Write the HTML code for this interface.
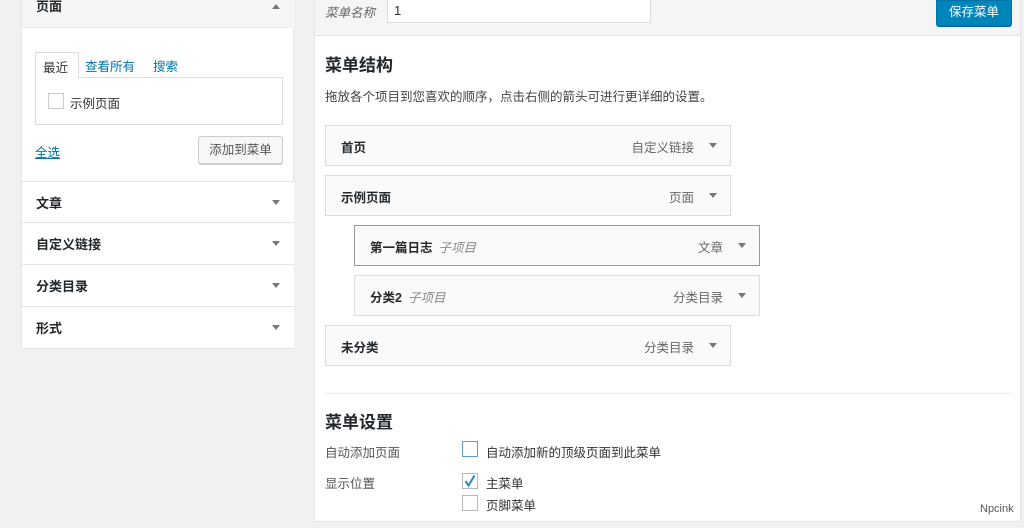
<!DOCTYPE html>
<html><head><meta charset="utf-8"><style>
*{box-sizing:border-box;margin:0;padding:0}
body{width:1024px;height:528px;background:#f1f1f1;position:relative;overflow:hidden;font-family:"Liberation Sans","Noto Sans CJK SC",sans-serif;font-size:12.5px;color:#444}
.a{position:absolute}
.lp{left:21px;top:0;width:273px;height:349px;background:#fff;border:1px solid #e5e5e5;border-top:none}
.sec{left:0;width:272px;height:42px;border-top:1px solid #e5e5e5;background:#fff;font-weight:bold;font-size:13px;color:#23282d;padding:11px 0 0 14px}
.arr{position:absolute;right:14px;top:18px;width:0;height:0;border-left:4px solid transparent;border-right:4px solid transparent;border-top:5px solid #777}
.item{background:#fafafa;border:1px solid #dcdcdc;height:41px;font-weight:bold;font-size:12.5px;color:#23282d;padding:11px 0 0 15px}
.item .t{position:absolute;right:36px;top:11px;font-weight:normal;color:#666}
.item .arr{right:13px;top:17px}
.item i{font-weight:normal;color:#888;margin-left:6px}
.cb{width:16px;height:16px;border:1px solid #b4b9be;background:#fff}
</style></head><body>
<div class="a lp">
 <div class="a" style="left:0;top:0;width:272px;height:28px;background:#f6f6f6;border-bottom:1px solid #eee;font-weight:bold;font-size:13px;color:#23282d;padding:0 0 0 14px;line-height:14px">页面<div class="a" style="right:14px;top:4px;border-left:4px solid transparent;border-right:4px solid transparent;border-bottom:5px solid #777;width:0;height:0"></div></div>
 <div class="a" style="left:13px;top:52px;width:44px;height:26px;border:1px solid #ddd;border-bottom:none;background:#fff;padding:4px 0 0 7px;color:#333;z-index:2">最近</div>
 <div class="a" style="left:63px;top:56px;color:#0073aa">查看所有</div>
 <div class="a" style="left:131px;top:56px;color:#0073aa">搜索</div>
 <div class="a" style="left:13px;top:77px;width:248px;height:48px;border:1px solid #ddd;background:#fff"></div>
 <div class="a cb" style="left:26px;top:93px;border-color:#ccc"></div>
 <div class="a" style="left:48px;top:93px;color:#333">示例页面</div>
 <div class="a" style="left:13px;top:142px;color:#0073aa;text-decoration:underline">全选</div>
 <div class="a" style="left:176px;top:136px;width:85px;height:28px;border:1px solid #ccc;background:#f7f7f7;border-radius:3px;box-shadow:0 1px 0 #ccc;color:#555;text-align:center;line-height:26px">添加到菜单</div>
 <div class="a sec" style="top:181px">文章<div class="arr"></div></div>
 <div class="a sec" style="top:222px">自定义链接<div class="arr"></div></div>
 <div class="a sec" style="top:264px">分类目录<div class="arr"></div></div>
 <div class="a sec" style="top:306px">形式<div class="arr"></div></div>
</div>
<div class="a" style="left:314px;top:0;width:707px;height:522px;background:#fff;border:1px solid #e5e5e5;border-top:none"></div>
<div class="a" style="left:315px;top:0;width:705px;height:36px;background:#f5f5f5;border-bottom:1px solid #e5e5e5"></div>
<div class="a" style="left:325px;top:2px;font-style:italic;color:#666">菜单名称</div>
<div class="a" style="left:387px;top:0;width:264px;height:23px;background:#fff;border:1px solid #ddd;border-top:none;padding:3px 0 0 6px;color:#333;font-size:13px">1</div>
<div class="a" style="left:936px;top:0;width:76px;height:26px;background:#0085ba;border:1px solid #0073aa;border-radius:0 0 3px 3px;box-shadow:0 1px 0 #006799;color:#fff;text-align:center;line-height:22px;font-size:12.5px">保存菜单</div>
<div class="a" style="left:325px;top:51px;font-size:17px;font-weight:bold;color:#23282d">菜单结构</div>
<div class="a" style="left:325px;top:86px;color:#444">拖放各个项目到您喜欢的顺序，点击右侧的箭头可进行更详细的设置。</div>
<div class="a item" style="left:325px;top:125px;width:406px">首页<span class="t">自定义链接</span><div class="arr"></div></div>
<div class="a item" style="left:325px;top:175px;width:406px">示例页面<span class="t">页面</span><div class="arr"></div></div>
<div class="a item" style="left:354px;top:225px;width:406px;border-color:#999">第一篇日志<i>子项目</i><span class="t">文章</span><div class="arr"></div></div>
<div class="a item" style="left:354px;top:275px;width:406px">分类2<i>子项目</i><span class="t">分类目录</span><div class="arr"></div></div>
<div class="a item" style="left:325px;top:325px;width:406px">未分类<span class="t">分类目录</span><div class="arr"></div></div>
<div class="a" style="left:325px;top:393px;width:688px;border-top:1px solid #eee"></div>
<div class="a" style="left:325px;top:408px;font-size:17px;font-weight:bold;color:#23282d">菜单设置</div>
<div class="a" style="left:325px;top:442px;color:#555">自动添加页面</div>
<div class="a cb" style="left:462px;top:441px;border-color:#5b9dd9"></div>
<div class="a" style="left:486px;top:442px;color:#333">自动添加新的顶级页面到此菜单</div>
<div class="a" style="left:325px;top:473px;color:#555">显示位置</div>
<div class="a cb" style="left:462px;top:473px"></div>
<svg class="a" style="left:462px;top:473px" width="16" height="16"><path d="M3.5 8 L6.5 12.5 L12.5 2.5" fill="none" stroke="#1e8cbe" stroke-width="2"/></svg>
<div class="a" style="left:486px;top:473px;color:#333">主菜单</div>
<div class="a cb" style="left:462px;top:495px"></div>
<div class="a" style="left:486px;top:495px;color:#333">页脚菜单</div>
<div class="a" style="left:980px;top:503px;color:#555;font-size:11px">Npcink</div>
</body></html>
